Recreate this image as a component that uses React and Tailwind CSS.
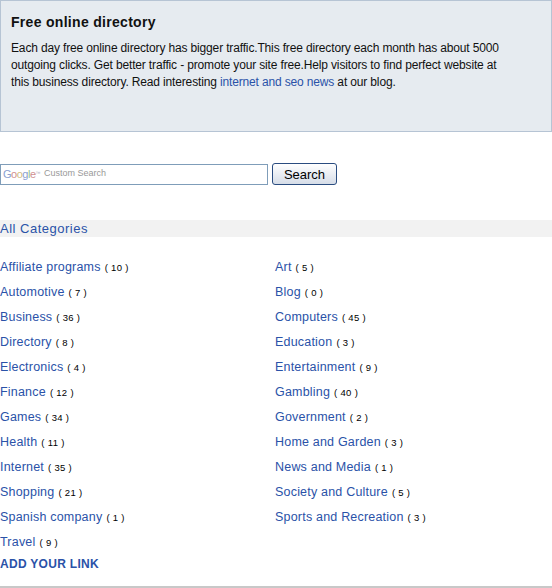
export default function App() {
  const left = [["Affiliate programs",10],["Automotive",7],["Business",36],["Directory",8],["Electronics",4],["Finance",12],["Games",34],["Health",11],["Internet",35],["Shopping",21],["Spanish company",1],["Travel",9]];
  const right = [["Art",5],["Blog",0],["Computers",45],["Education",3],["Entertainment",9],["Gambling",40],["Government",2],["Home and Garden",3],["News and Media",1],["Society and Culture",5],["Sports and Recreation",3]];
  const Item = ({n,c}) => (
    <div className="h-[25px] flex items-start whitespace-nowrap">
      <span className="text-[12.5px] text-[#2a52a8] leading-[16px] tracking-[0.2px]">{n}</span>
      <span className="text-[9.5px] text-black ml-[4px] leading-[16px] mt-[1px] tracking-[0.3px]">( {c} )</span>
    </div>
  );
  return (
    <div className="w-[552px] h-[588px] bg-white" style={{fontFamily:'"Liberation Sans", Arial, sans-serif'}}>
      <div className="h-[132px] bg-[#e6ebf0] border border-[#b6c4d4] px-[10px] pt-[12px]">
        <div className="text-[14px] font-bold text-[#111] leading-[18px] tracking-[0.3px]">Free online directory</div>
        <p className="mt-[9px] text-[12px] leading-[17px] text-[#111] w-[492px] tracking-[-0.15px]">Each day free online directory has bigger traffic.This free directory each month has about 5000 outgoing clicks. Get better traffic - promote your site free.Help visitors to find perfect website at this business directory. Read interesting <span className="text-[#2a52a8]">internet and seo news</span> at our blog.</p>
      </div>
      <div className="mt-[31px] flex items-center gap-[4px]">
        <div className="w-[268px] h-[21px] border border-[#7f9db9] flex items-center pl-[2px]">
          <span className="text-[11px] text-[#aab] tracking-[-0.5px]"><span className="text-[#8aa0d0]">G</span><span className="text-[#d09090]">o</span><span className="text-[#d0c080]">o</span><span className="text-[#8aa0d0]">g</span><span className="text-[#90c090]">l</span><span className="text-[#d09090]">e</span><sup className="text-[5px]">™</sup></span>
          <span className="text-[9px] text-[#999] ml-[4px]">Custom Search</span>
        </div>
        <button className="w-[65px] h-[22px] border border-[#2a4c80] rounded-[3px] bg-gradient-to-b from-white to-[#d6dde8] text-[13px] text-black leading-none">Search</button>
      </div>
      <div className="mt-[35px] h-[17px] bg-[#f2f2f2] text-[13px] text-[#2a52a8] leading-[17px] tracking-[0.5px]">All Categories</div>
      <div className="mt-[22px] flex">
        <div className="w-[275px]">{left.map(([n,c])=><Item key={n} n={n} c={c}/>)}</div>
        <div>{right.map(([n,c])=><Item key={n} n={n} c={c}/>)}</div>
      </div>
      <div className="-mt-[3px] text-[12px] font-bold text-[#2a52a8] leading-[16px] tracking-[0.3px]">ADD YOUR LINK</div>
      <div className="mt-[14px] border-t-2 border-[#c8c8c8]"></div>
    </div>
  );
}
